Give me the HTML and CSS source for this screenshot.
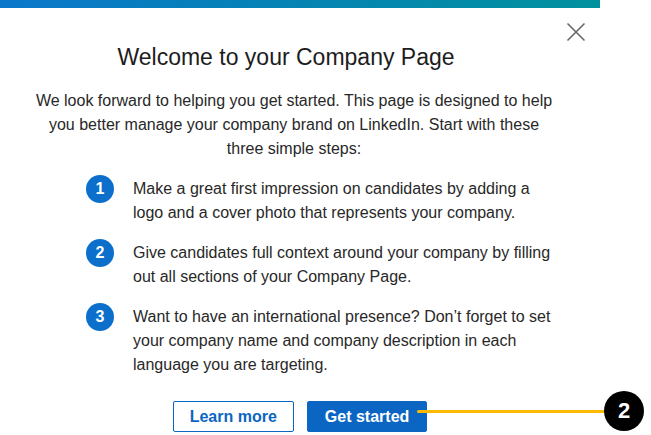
FILE: index.html
```html
<!DOCTYPE html>
<html lang="en">
<head>
<meta charset="UTF-8" />
<meta name="viewport" content="width=device-width, initial-scale=1" />
<title>Welcome to your Company Page</title>
<link rel="stylesheet" href="styles.css">
</head>
<body>

<div class="modal">
  <div class="bar"></div>
  <div class="head">
    <h2>Welcome to your Company Page</h2>
    <button class="close" aria-label="Dismiss">
      <svg width="24" height="24" viewBox="0 0 24 24"><path d="M3.5 3.5 L20.5 20.5 M20.5 3.5 L3.5 20.5" stroke="#666" stroke-width="1.6" fill="none"/></svg>
    </button>
  </div>
  <p class="intro">We look forward to helping you get started. This page is designed to help you better manage your company brand on LinkedIn. Start with these three simple steps:</p>
  <ol class="steps">
    <li><span class="num">1</span><span>Make a great first impression on candidates by adding a logo and a cover photo that represents your company.</span></li>
    <li><span class="num">2</span><span>Give candidates full context around your company by filling out all sections of your Company Page.</span></li>
    <li><span class="num">3</span><span>Want to have an international presence? Don’t forget to set your company name and company description in each language you are targeting.</span></li>
  </ol>
  <div class="actions">
    <button class="btn outline">Learn more</button>
    <button class="btn primary">Get started</button>
  </div>
</div>

<div class="callout">
  <span class="line"></span>
  <span class="badge">2</span>
</div>

</body>
</html>
```

FILE: styles.css
```css
body {
  font-family: "Liberation Sans", Arial, sans-serif;
  background: #fff;
  color: #282828;
  margin: 0;
}
.modal {
  width: 600px;
  background: #fff;
}
.bar {
  height: 8px;
  background: linear-gradient(90deg, #0a77ca, #01919d);
}
.head {
  display: flex;
  align-items: flex-start;
  padding: 12px 12px 0 24px;
}
.head h2 {
  flex: 1;
  margin: 23px 16px 0 0;
  font-size: 23px;
  line-height: 28px;
  font-weight: normal;
  text-align: center;
  color: #1d1d1d;
}
.close {
  width: 24px;
  height: 24px;
  padding: 0;
  border: none;
  background: none;
  cursor: pointer;
}
.intro {
  margin: 18px 44px 0 32px;
  font-size: 16px;
  line-height: 24px;
  text-align: center;
}
.steps {
  list-style: none;
  margin: 16px 0 0;
  padding: 0 36px 0 86px;
  display: flex;
  flex-direction: column;
  gap: 16px;
}
.steps li {
  display: flex;
  gap: 19px;
  font-size: 16px;
  line-height: 24px;
}
.num {
  flex: none;
  width: 28px;
  height: 28px;
  margin-top: -2px;
  border-radius: 50%;
  background: #0b6fcb;
  color: #fff;
  font-weight: bold;
  font-size: 16px;
  line-height: 28px;
  text-align: center;
}
.actions {
  display: flex;
  justify-content: center;
  gap: 13px;
  margin-top: 24px;
}
.btn {
  height: 31px;
  padding: 0 16px;
  font-family: inherit;
  font-size: 16px;
  font-weight: bold;
  border-radius: 2px;
  cursor: pointer;
}
.outline {
  background: #fff;
  color: #0a66c2;
  border: 1px solid #0a66c2;
}
.primary {
  padding: 0 17px;
  background: #0a66c2;
  color: #fff;
  border: 1px solid #0a66c2;
}
.callout {
  position: absolute;
  left: 417px;
  top: 391px;
  display: flex;
  align-items: center;
}
.line {
  width: 190px;
  height: 3px;
  background: #fbb900;
  border-radius: 2px;
}
.badge {
  width: 40px;
  height: 40px;
  margin-left: -3px;
  border-radius: 50%;
  background: #000;
  color: #fff;
  font-weight: bold;
  font-size: 22px;
  line-height: 40px;
  text-align: center;
}
```
